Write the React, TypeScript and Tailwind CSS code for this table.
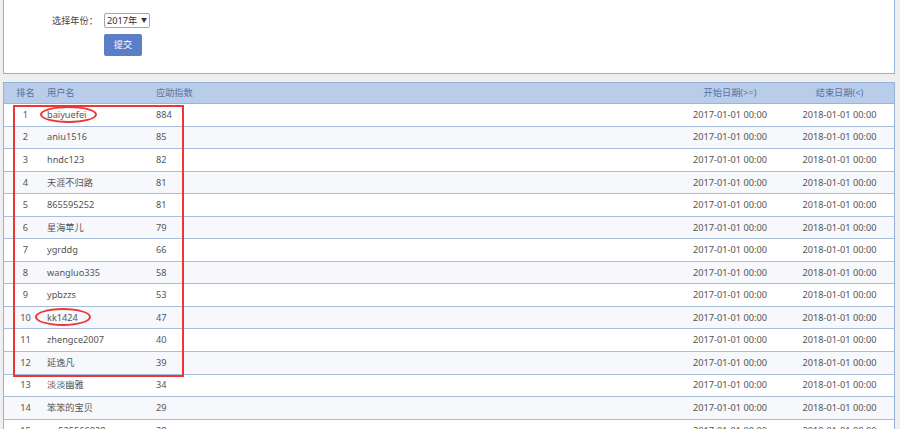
const rows = [
  { rank: 1, name: "baiyuefei", score: 884 },
  { rank: 2, name: "aniu1516", score: 85 },
  { rank: 3, name: "hndc123", score: 82 },
  { rank: 4, name: "天涯不归路", score: 81 },
  { rank: 5, name: "865595252", score: 81 },
  { rank: 6, name: "星海苹儿", score: 79 },
  { rank: 7, name: "ygrddg", score: 66 },
  { rank: 8, name: "wangluo335", score: 58 },
  { rank: 9, name: "ypbzzs", score: 53 },
  { rank: 10, name: "kk1424", score: 47 },
  { rank: 11, name: "zhengce2007", score: 40 },
  { rank: 12, name: "延逸凡", score: 39 },
  { rank: 13, name: "淡淡幽雅", score: 34 },
  { rank: 14, name: "笨笨的宝贝", score: 29 },
  { rank: 15, name: "qq525566828", score: 28 },
];

const cols = "grid grid-cols-[43px_109px_1fr_110px_109px] items-center";

export default function App() {
  return (
    <div className="relative h-[429px] w-[900px] overflow-hidden bg-[#efefef] pl-[3px] font-['Noto_Sans','Noto_Sans_CJK_SC',sans-serif] text-[9.2px] text-[#555]">
      {/* search form */}
      <div className="h-[74px] w-[892px] border border-t-0 border-[#93b2d6] bg-white pl-[48px] pt-[13px]">
        <div className="flex items-center">
          <span className="w-[52px] text-[#444]">选择年份：</span>
          <div className="flex h-[15px] w-[46px] items-center justify-between rounded-[2px] border border-[#a6a6a6] px-[2px] text-[#333]">
            <span>2017年</span>
            <span className="text-[6px]">▼</span>
          </div>
        </div>
        <button className="ml-[52px] mt-[6px] flex h-[22px] w-[38px] items-center justify-center rounded-[2px] bg-[#5b7ec6] text-white">
          提交
        </button>
      </div>

      {/* ranking table */}
      <div className="mt-[8px] w-[892px] border border-b-0 border-[#93b2d6] bg-white">
        <div className={`${cols} h-[21px] border-b border-[#9db5d5] bg-[#b9cdea] text-[#5872a4]`}>
          <span className="text-center">排名</span>
          <span>用户名</span>
          <span>应助指数</span>
          <span className="text-center">开始日期(&gt;=)</span>
          <span className="text-center">结束日期(&lt;)</span>
        </div>
        {rows.map((r, i) => (
          <div
            key={r.rank}
            className={`${cols} h-[22.55px] border-b border-[#a9bedb] ${i % 2 === 0 ? "bg-white" : "bg-[#f6f8fb]"}`}
          >
            <span className="text-center">{r.rank}</span>
            <span>{r.name}</span>
            <span>{r.score}</span>
            <span className="text-center">2017-01-01 00:00</span>
            <span className="text-center">2018-01-01 00:00</span>
          </div>
        ))}
      </div>

      {/* red annotations */}
      <div className="absolute left-[13px] top-[105px] h-[272px] w-[171px] border-2 border-[#ee3535]" />
      <div className="absolute left-[40px] top-[106px] h-[17px] w-[57px] rounded-[50%] border-2 border-[#ee3535]" />
      <div className="absolute left-[35px] top-[308px] h-[18px] w-[56px] rounded-[50%] border-2 border-[#ee3535]" />
    </div>
  );
}
